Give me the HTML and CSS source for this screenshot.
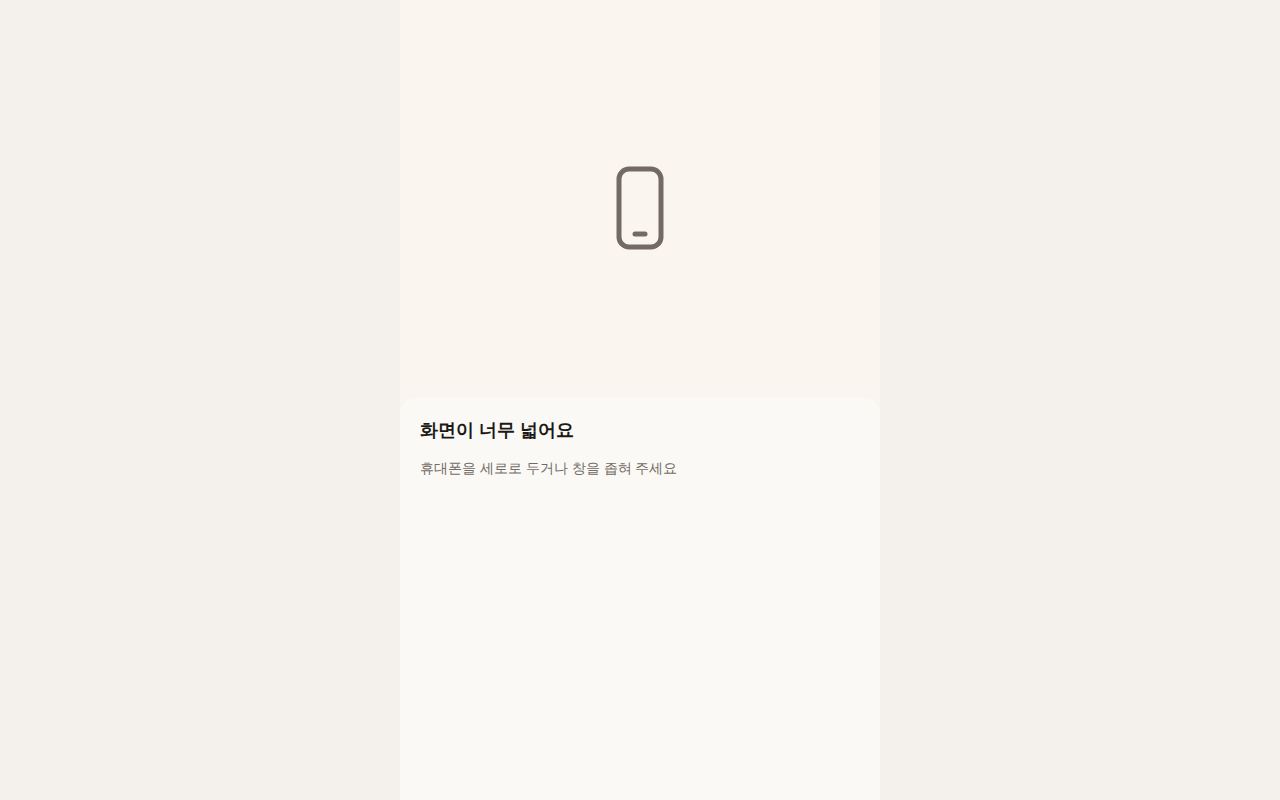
FILE: index.html
```html
<!DOCTYPE html>
<html lang="ko">
<head>
  <meta charset="UTF-8">
  <meta name="viewport" content="width=device-width, initial-scale=1.0">
  <title>화면이 너무 넓어요</title>
  <link rel="stylesheet" href="styles.css">
</head>
<body>
  <main class="screen">
    <div class="hero">
      <!-- Phone icon -->
      <svg class="phone-icon" viewBox="0 0 24 24" fill="none" stroke="currentColor" stroke-width="1.25" stroke-linecap="round" stroke-linejoin="round" aria-hidden="true">
        <rect x="6.75" y="2.25" width="10.5" height="19.5" rx="2.5"/>
        <path d="M10.75 18.5h2.5"/>
      </svg>
    </div>

    <!-- Bottom sheet -->
    <section class="sheet">
      <h1 class="sheet-title">화면이 너무 넓어요</h1>
      <p class="sheet-text">휴대폰을 세로로 두거나 창을 좁혀 주세요</p>
    </section>
  </main>
</body>
</html>
```

FILE: styles.css
```css
* {
  box-sizing: border-box;
  margin: 0;
  padding: 0;
}

body {
  background-color: #f4f0eb;
  font-family: "Liberation Sans", sans-serif;
  color: #1c1917;
}

.screen {
  display: flex;
  flex-direction: column;
  max-width: 480px;
  min-height: 100vh;
  margin: 0 auto;
  background-color: #faf5ef;
}

/* Icon area */
.hero {
  display: flex;
  align-items: center;
  justify-content: center;
  height: 52vh;
}

.phone-icon {
  width: 96px;
  height: 96px;
  color: #746a64;
}

/* Bottom sheet, overlaps the bottom of the icon area */
.sheet {
  flex: 1;
  margin-top: -18px;
  padding: 20px;
  background-color: #faf9f5;
  border-radius: 16px 16px 0 0;
}

.sheet-title {
  margin-bottom: 14px;
  font-size: 18px;
  font-weight: 700;
  line-height: 24px;
}

.sheet-text {
  font-size: 14px;
  line-height: 24px;
  color: #746a64;
}
```
